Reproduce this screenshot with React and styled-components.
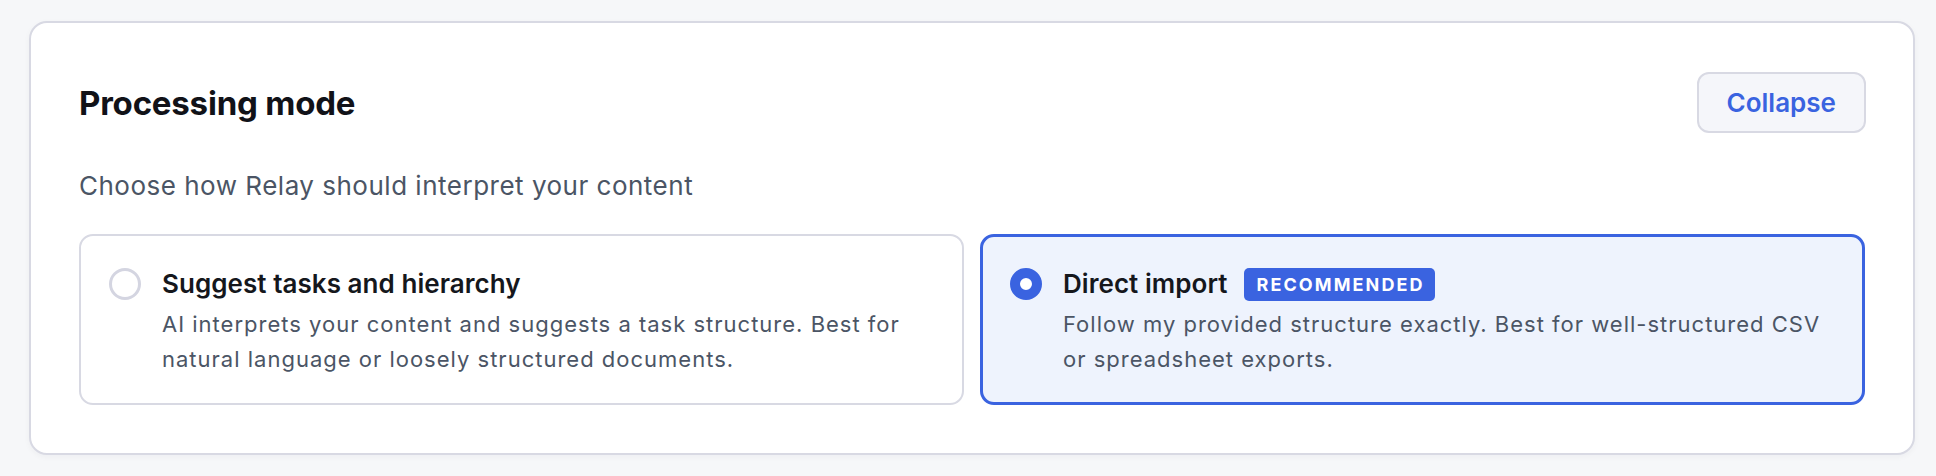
import React, { useState } from 'react';
import styled, { createGlobalStyle, css } from 'styled-components';

const GlobalStyle = createGlobalStyle`
  body {
    margin: 0;
    background: #f6f7f9;
    font-family: Inter, "Noto Sans", "Liberation Sans", sans-serif;
    -webkit-font-smoothing: antialiased;
  }
`;

const modes = [
  {
    id: 'suggest',
    title: 'Suggest tasks and hierarchy',
    description:
      'AI interprets your content and suggests a task structure. Best for natural language or loosely structured documents.',
  },
  {
    id: 'direct',
    title: 'Direct import',
    badge: 'Recommended',
    description:
      'Follow my provided structure exactly. Best for well-structured CSV or spreadsheet exports.',
  },
];

const App = () => {
  const [mode, setMode] = useState('direct');

  return (
    <Page>
      <GlobalStyle />
      <Panel>
        <Header>
          <Heading>Processing mode</Heading>
          <CollapseButton type="button">Collapse</CollapseButton>
        </Header>
        <Subtitle>Choose how Relay should interpret your content</Subtitle>
        <Options>
          {modes.map((m) => (
            <Option key={m.id} $active={mode === m.id} onClick={() => setMode(m.id)}>
              <Radio $active={mode === m.id} />
              <OptionBody>
                <TitleRow>
                  <OptionTitle>{m.title}</OptionTitle>
                  {m.badge && <Badge>{m.badge}</Badge>}
                </TitleRow>
                <Description>{m.description}</Description>
              </OptionBody>
            </Option>
          ))}
        </Options>
      </Panel>
    </Page>
  );
};

const Page = styled.div`
  padding: 21px 21px 21px 29px;
`;

const Panel = styled.section`
  background: #ffffff;
  border: 2px solid #d8d9e3;
  border-radius: 18px;
  padding: 49px 48px 48px 48px;
  box-shadow: 0 2px 6px rgba(30, 35, 60, 0.04);
`;

const Header = styled.div`
  display: flex;
  align-items: center;
  justify-content: space-between;
`;

const Heading = styled.h2`
  margin: 0;
  font-size: 33px;
  line-height: 40px;
  font-weight: 700;
  color: #111218;
  letter-spacing: -0.2px;
`;

const CollapseButton = styled.button`
  height: 61px;
  padding: 0 28px;
  margin-right: -1px;
  background: #f5f6fa;
  border: 2px solid #d8d9e3;
  border-radius: 12px;
  font-family: inherit;
  font-size: 26px;
  font-weight: 600;
  color: #3a63e0;
  cursor: pointer;
`;

const Subtitle = styled.p`
  margin: 35px 0 30px;
  font-size: 26px;
  line-height: 36px;
  letter-spacing: 0.5px;
  color: #4b5565;
`;

const Options = styled.div`
  display: grid;
  grid-template-columns: 1fr 1fr;
  gap: 16px;
`;

/* selected card gets a 3px border, so its padding drops by 1px to keep content aligned */
const Option = styled.div`
  display: flex;
  align-items: flex-start;
  gap: 21px;
  padding: 30px 24px 26px 28px;
  border: 2px solid #d8d9e3;
  border-radius: 14px;
  background: #ffffff;
  cursor: pointer;

  ${(p) =>
    p.$active &&
    css`
      padding: 29px 23px 25px 27px;
      border: 3px solid #3a63e0;
      background: #eef3fd;
    `}
`;

const Radio = styled.span`
  flex: none;
  box-sizing: border-box;
  width: 32px;
  height: 32px;
  margin-top: 2px;
  border-radius: 50%;
  border: 3px solid #d4d5e1;
  background: #ffffff;

  ${(p) =>
    p.$active &&
    css`
      border: 10px solid #3a63e0;
      background: #ffffff;
    `}
`;

const OptionBody = styled.div`
  display: flex;
  flex-direction: column;
  gap: 5px;
  min-width: 0;
`;

const TitleRow = styled.div`
  display: flex;
  align-items: center;
  gap: 17px;
`;

const OptionTitle = styled.span`
  font-size: 26px;
  line-height: 36px;
  font-weight: 600;
  letter-spacing: 0.05px;
  color: #15171c;
`;

const Badge = styled.span`
  display: inline-flex;
  align-items: center;
  height: 33px;
  padding: 0 10px 0 12px;
  border-radius: 5px;
  background: #3a63e0;
  color: #ffffff;
  font-size: 18px;
  font-weight: 700;
  letter-spacing: 2.1px;
  text-transform: uppercase;
`;

const Description = styled.p`
  margin: 0;
  font-size: 22px;
  line-height: 35px;
  letter-spacing: 1px;
  color: #4b5565;
`;

export default App;
